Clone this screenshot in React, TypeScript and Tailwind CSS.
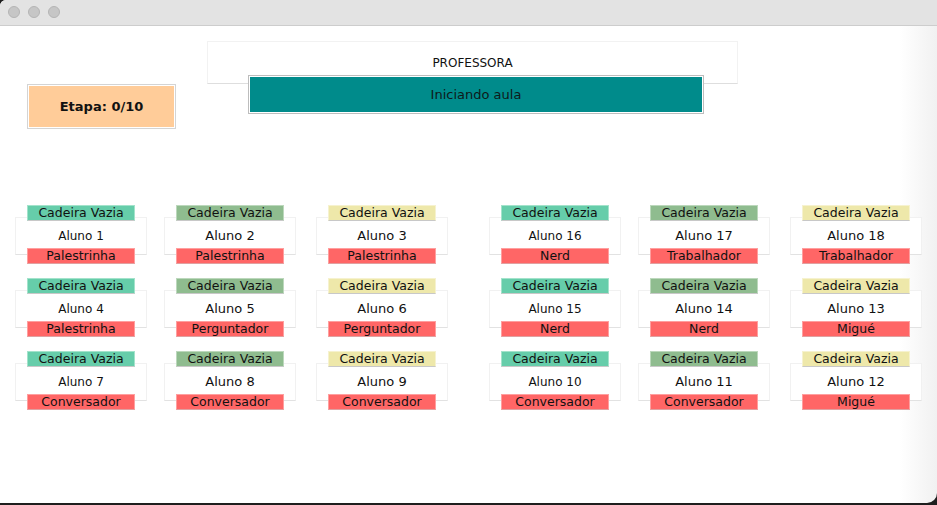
const font = { fontFamily: '"DejaVu Sans", "Liberation Sans", sans-serif' };

type Seat = { aluno: string; tipo: string };

const rows: Seat[][] = [
  [
    { aluno: "Aluno 1", tipo: "Palestrinha" },
    { aluno: "Aluno 2", tipo: "Palestrinha" },
    { aluno: "Aluno 3", tipo: "Palestrinha" },
    { aluno: "Aluno 16", tipo: "Nerd" },
    { aluno: "Aluno 17", tipo: "Trabalhador" },
    { aluno: "Aluno 18", tipo: "Trabalhador" },
  ],
  [
    { aluno: "Aluno 4", tipo: "Palestrinha" },
    { aluno: "Aluno 5", tipo: "Perguntador" },
    { aluno: "Aluno 6", tipo: "Perguntador" },
    { aluno: "Aluno 15", tipo: "Nerd" },
    { aluno: "Aluno 14", tipo: "Nerd" },
    { aluno: "Aluno 13", tipo: "Migué" },
  ],
  [
    { aluno: "Aluno 7", tipo: "Conversador" },
    { aluno: "Aluno 8", tipo: "Conversador" },
    { aluno: "Aluno 9", tipo: "Conversador" },
    { aluno: "Aluno 10", tipo: "Conversador" },
    { aluno: "Aluno 11", tipo: "Conversador" },
    { aluno: "Aluno 12", tipo: "Migué" },
  ],
];

// per column: left margin, chair colour, name size
const cols = [
  { ml: "ml-[15px]", chair: "bg-[#66cdaa] border-[#a3e3cb]", name: "text-[12px]" },
  { ml: "ml-[17px]", chair: "bg-[#8fbc8f] border-[#bcd8bc]", name: "text-[13px]" },
  { ml: "ml-[20px]", chair: "bg-[#eee8aa] border-[#f6f2cf]", name: "text-[13px]" },
  { ml: "ml-[41px]", chair: "bg-[#66cdaa] border-[#a3e3cb]", name: "text-[12px]" },
  { ml: "ml-[17px]", chair: "bg-[#8fbc8f] border-[#bcd8bc]", name: "text-[13px]" },
  { ml: "ml-[20px]", chair: "bg-[#eee8aa] border-[#f6f2cf]", name: "text-[13px]" },
];

function Cell({ seat, col }: { seat: Seat; col: number }) {
  const c = cols[col];
  return (
    <div className={`${c.ml} w-[132px] flex flex-col`}>
      <div
        className={`relative z-10 ml-[12px] w-[108px] h-[16px] border border-b-[#c8c8c8] ${c.chair} flex items-center justify-center text-[12.5px] text-[#111] leading-none`}
      >
        Cadeira Vazia
      </div>
      <div
        className={`-mt-[4px] h-[38px] border border-[#f1f1f1] border-b-[#e2e2e2] bg-white flex items-center justify-center ${c.name} text-[#111]`}
      >
        {seat.aluno}
      </div>
      <div className="relative z-10 -mt-[7px] ml-[12px] w-[108px] h-[16px] border border-[#ff9f9f] border-b-[#e0a0a0] bg-[#ff6666] flex items-center justify-center text-[12.5px] text-[#111] leading-none">
        {seat.tipo}
      </div>
    </div>
  );
}

export default function App() {
  return (
    <div className="w-[937px] h-[505px] bg-[#1e1e1e] overflow-hidden" style={font}>
      <div className="h-[503px] rounded-tl-[6px] rounded-br-[10px] bg-[linear-gradient(to_right,#ffffff_96%,#f1f1f1_100%)] overflow-hidden flex flex-col">
        {/* title bar */}
        <div className="h-[26px] bg-[#e3e3e3] border-b border-[#cdcdcd] flex items-center gap-[8px] pl-[8px] pb-[2px]">
          <span className="w-[12px] h-[12px] rounded-full bg-[#c6c6c6] border border-[#b4b4b4]" />
          <span className="w-[12px] h-[12px] rounded-full bg-[#c6c6c6] border border-[#b4b4b4]" />
          <span className="w-[12px] h-[12px] rounded-full bg-[#c6c6c6] border border-[#b4b4b4]" />
        </div>

        {/* top */}
        <div className="flex items-start">
          <div className="mt-[59px] ml-[28px] w-[147px] h-[43px] bg-[#ffcc99] border border-white outline outline-1 outline-[#d4d4d4] flex items-center justify-center font-bold text-[13px] text-[#111]">
            Etapa: 0/10
          </div>
          <div className="mt-[15px] ml-[32px] w-[531px] flex flex-col">
            <div className="h-[43px] border border-[#f2f2f2] border-b-[#dedede] bg-white flex items-center justify-center text-[12px] text-[#111]">
              PROFESSORA
            </div>
            <div className="-mt-[8px] ml-[42px] w-[454px] h-[37px] bg-[#008b8b] border border-white outline outline-1 outline-[#bdbdbd] flex items-center justify-center text-[13px] text-[#0d1a1a]">
              Iniciando aula
            </div>
          </div>
        </div>

        {/* seats */}
        <div className="mt-[77px] flex flex-col gap-[14px]">
          {rows.map((row, r) => (
            <div key={r} className="flex">
              {row.map((seat, i) => (
                <Cell key={i} seat={seat} col={i} />
              ))}
            </div>
          ))}
        </div>
      </div>
    </div>
  );
}
